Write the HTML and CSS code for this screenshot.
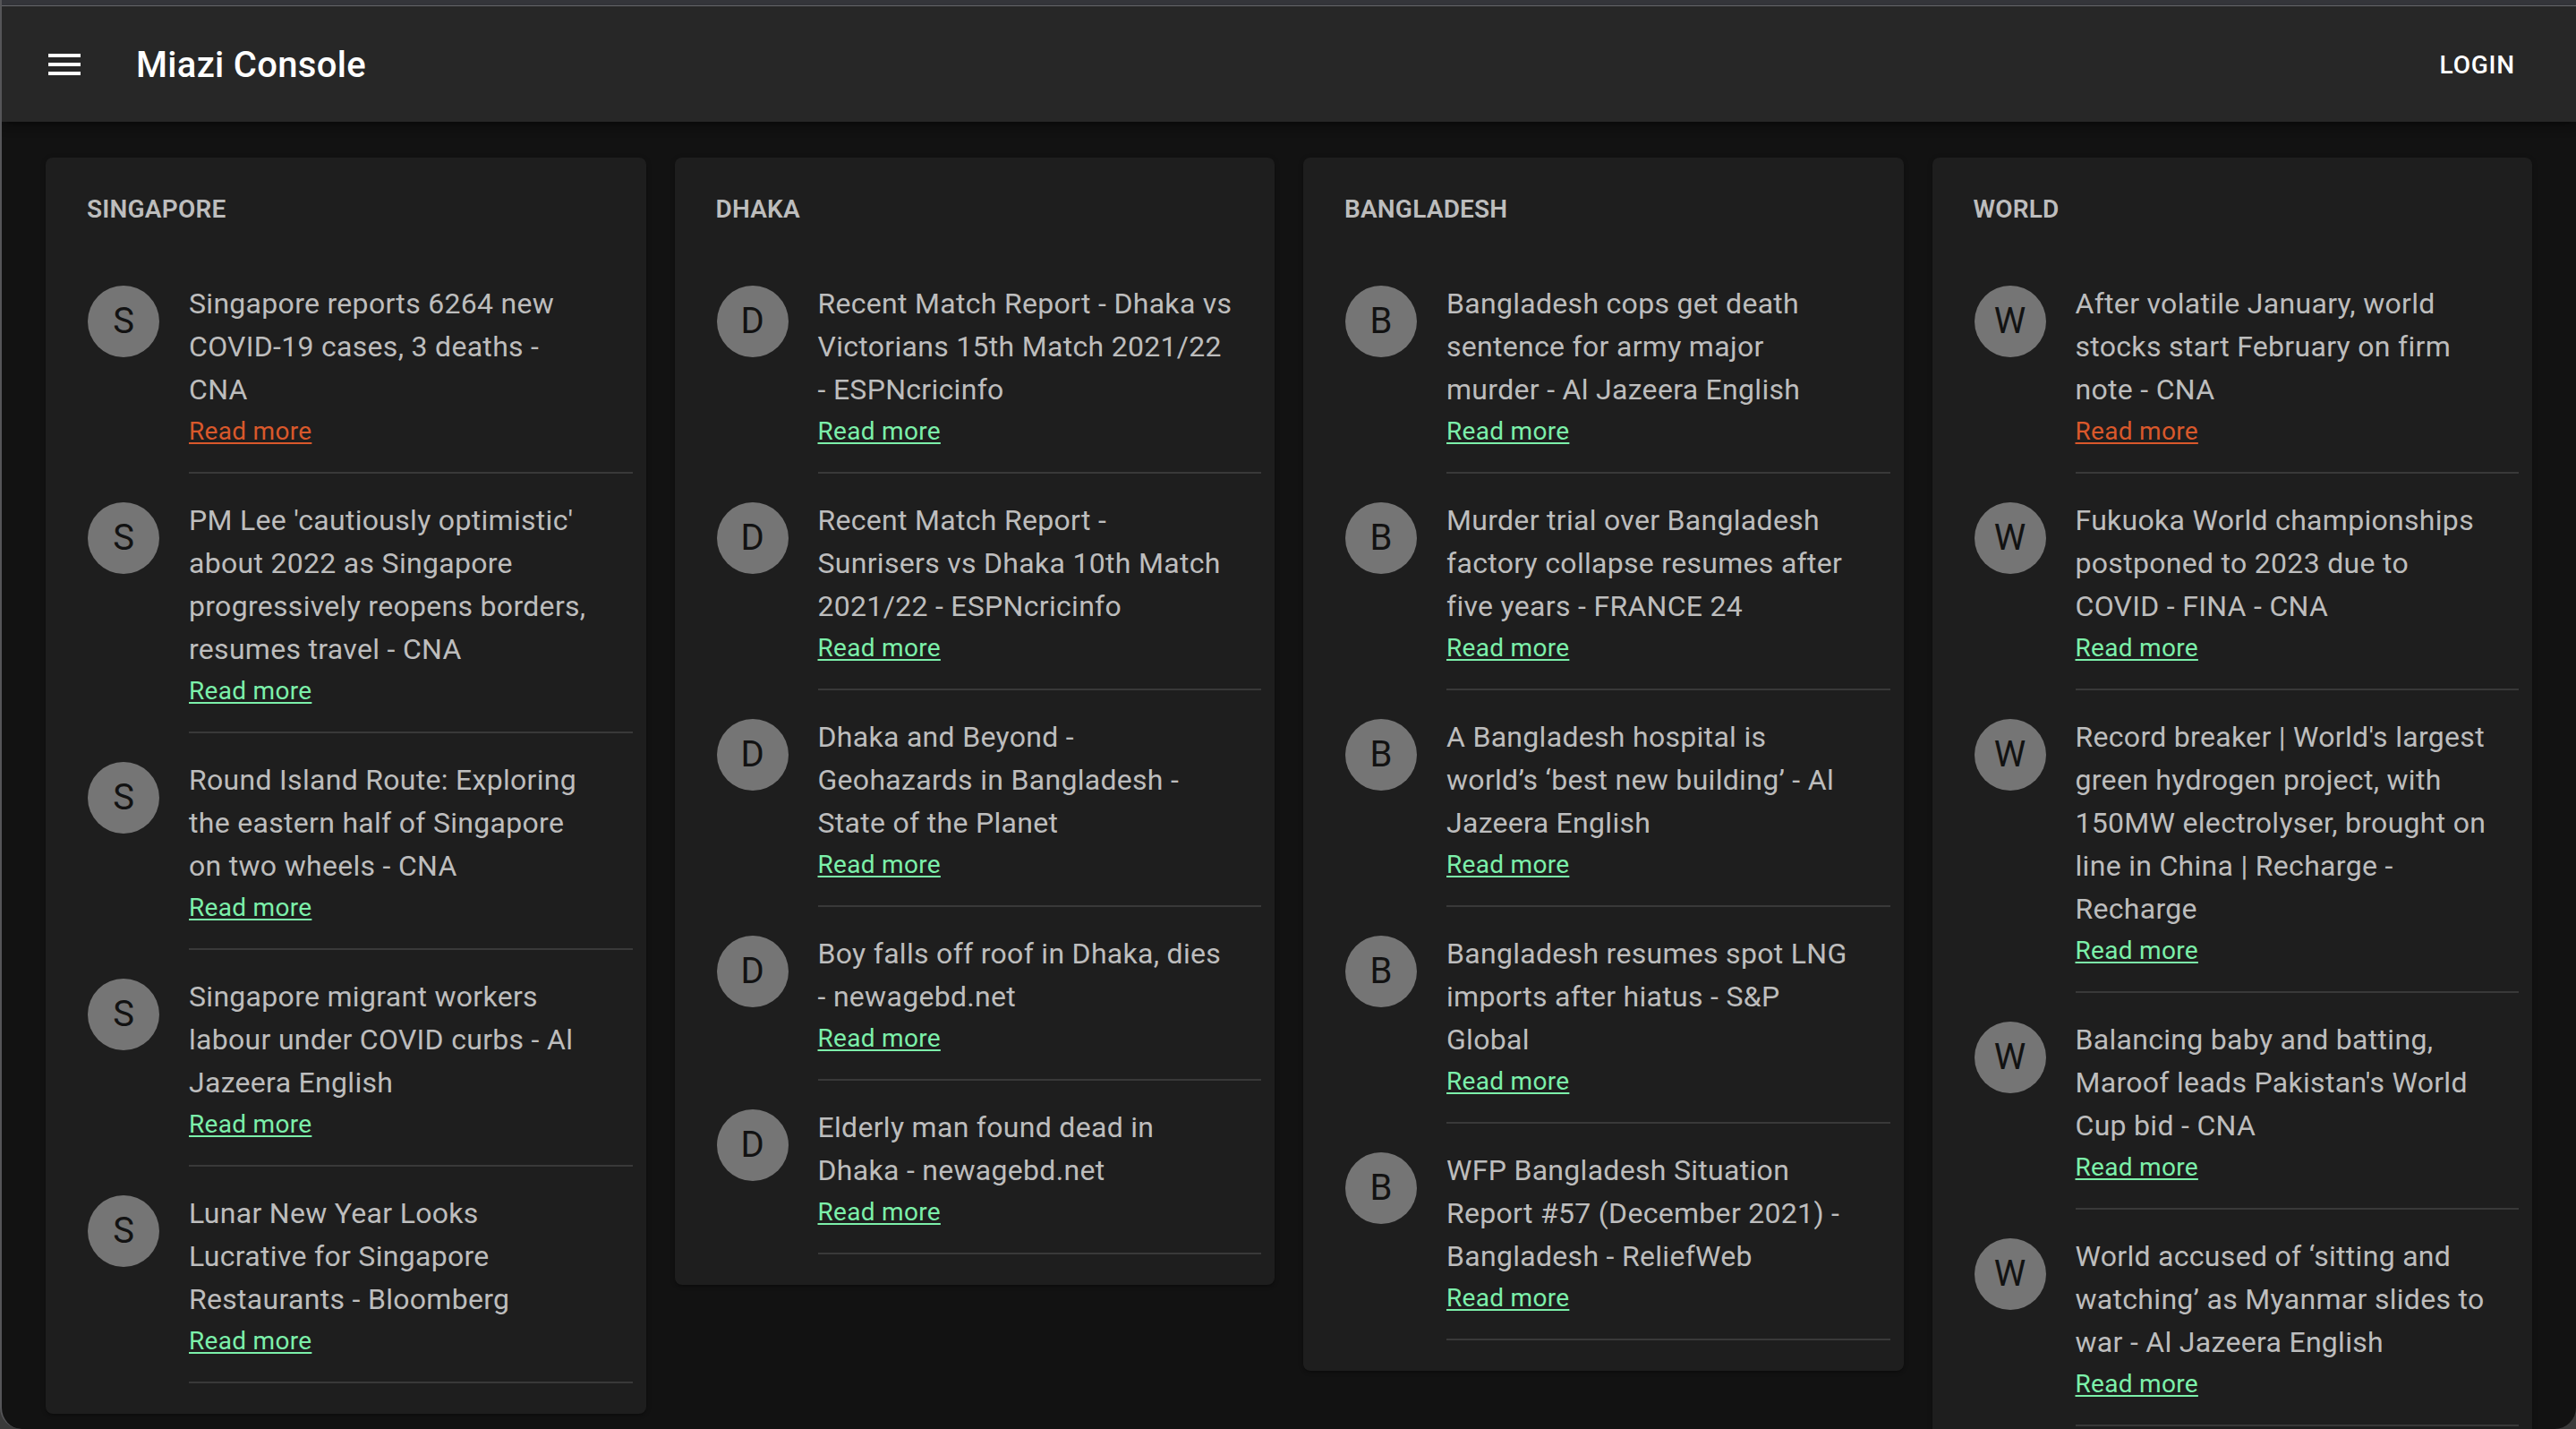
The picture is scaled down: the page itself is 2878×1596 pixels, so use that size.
FILE: index.html
```html
<!DOCTYPE html>
<html lang="en">
<head>
<meta charset="utf-8">
<title>Miazi Console</title>
<link rel="stylesheet" href="styles.css">
</head>
<body>
<div class="window">
  <div class="chrome"></div>
  <header class="appbar">
    <button class="icon-btn" aria-label="menu">
      <svg viewBox="0 0 24 24" width="48" height="48"><path fill="#fff" d="M3 18h18v-2H3v2zm0-5h18v-2H3v2zm0-7v2h18V6H3z"/></svg>
    </button>
    <h1 class="brand">Miazi Console</h1>
    <span class="spacer"></span>
    <button class="login">LOGIN</button>
  </header>
  <main class="grid">
    <section class="card">
      <h2 class="card-title">SINGAPORE</h2>
      <ul class="news">
        <li class="item"><span class="avatar">S</span><div class="text"><p class="headline">Singapore reports 6264 new COVID-19 cases, 3 deaths - CNA</p><a class="more visited" href="#">Read more</a></div></li>
        <li class="divider"></li>
        <li class="item"><span class="avatar">S</span><div class="text"><p class="headline">PM Lee 'cautiously optimistic' about 2022 as Singapore progressively reopens borders, resumes travel - CNA</p><a class="more" href="#">Read more</a></div></li>
        <li class="divider"></li>
        <li class="item"><span class="avatar">S</span><div class="text"><p class="headline">Round Island Route: Exploring the eastern half of Singapore on two wheels - CNA</p><a class="more" href="#">Read more</a></div></li>
        <li class="divider"></li>
        <li class="item"><span class="avatar">S</span><div class="text"><p class="headline">Singapore migrant workers labour under COVID curbs - Al Jazeera English</p><a class="more" href="#">Read more</a></div></li>
        <li class="divider"></li>
        <li class="item"><span class="avatar">S</span><div class="text"><p class="headline">Lunar New Year Looks Lucrative for Singapore Restaurants - Bloomberg</p><a class="more" href="#">Read more</a></div></li>
        <li class="divider"></li>
      </ul>
    </section>
    <section class="card">
      <h2 class="card-title">DHAKA</h2>
      <ul class="news">
        <li class="item"><span class="avatar">D</span><div class="text"><p class="headline">Recent Match Report - Dhaka vs Victorians 15th Match 2021/22 - ESPNcricinfo</p><a class="more" href="#">Read more</a></div></li>
        <li class="divider"></li>
        <li class="item"><span class="avatar">D</span><div class="text"><p class="headline">Recent Match Report - Sunrisers vs Dhaka 10th Match 2021/22 - ESPNcricinfo</p><a class="more" href="#">Read more</a></div></li>
        <li class="divider"></li>
        <li class="item"><span class="avatar">D</span><div class="text"><p class="headline">Dhaka and Beyond - Geohazards in Bangladesh - State of the Planet</p><a class="more" href="#">Read more</a></div></li>
        <li class="divider"></li>
        <li class="item"><span class="avatar">D</span><div class="text"><p class="headline">Boy falls off roof in Dhaka, dies - newagebd.net</p><a class="more" href="#">Read more</a></div></li>
        <li class="divider"></li>
        <li class="item"><span class="avatar">D</span><div class="text"><p class="headline">Elderly man found dead in Dhaka - newagebd.net</p><a class="more" href="#">Read more</a></div></li>
        <li class="divider"></li>
      </ul>
    </section>
    <section class="card">
      <h2 class="card-title">BANGLADESH</h2>
      <ul class="news">
        <li class="item"><span class="avatar">B</span><div class="text"><p class="headline">Bangladesh cops get death sentence for army major murder - Al Jazeera English</p><a class="more" href="#">Read more</a></div></li>
        <li class="divider"></li>
        <li class="item"><span class="avatar">B</span><div class="text"><p class="headline">Murder trial over Bangladesh factory collapse resumes after five years - FRANCE 24</p><a class="more" href="#">Read more</a></div></li>
        <li class="divider"></li>
        <li class="item"><span class="avatar">B</span><div class="text"><p class="headline">A Bangladesh hospital is world’s ‘best new building’ - Al Jazeera English</p><a class="more" href="#">Read more</a></div></li>
        <li class="divider"></li>
        <li class="item"><span class="avatar">B</span><div class="text"><p class="headline">Bangladesh resumes spot LNG imports after hiatus - S&amp;P Global</p><a class="more" href="#">Read more</a></div></li>
        <li class="divider"></li>
        <li class="item"><span class="avatar">B</span><div class="text"><p class="headline">WFP Bangladesh Situation Report #57 (December 2021) - Bangladesh - ReliefWeb</p><a class="more" href="#">Read more</a></div></li>
        <li class="divider"></li>
      </ul>
    </section>
    <section class="card">
      <h2 class="card-title">WORLD</h2>
      <ul class="news">
        <li class="item"><span class="avatar">W</span><div class="text"><p class="headline">After volatile January, world stocks start February on firm note - CNA</p><a class="more visited" href="#">Read more</a></div></li>
        <li class="divider"></li>
        <li class="item"><span class="avatar">W</span><div class="text"><p class="headline">Fukuoka World championships postponed to 2023 due to COVID - FINA - CNA</p><a class="more" href="#">Read more</a></div></li>
        <li class="divider"></li>
        <li class="item"><span class="avatar">W</span><div class="text"><p class="headline">Record breaker | World's largest green hydrogen project, with 150MW electrolyser, brought on line in China | Recharge - Recharge</p><a class="more" href="#">Read more</a></div></li>
        <li class="divider"></li>
        <li class="item"><span class="avatar">W</span><div class="text"><p class="headline">Balancing baby and batting, Maroof leads Pakistan's World Cup bid - CNA</p><a class="more" href="#">Read more</a></div></li>
        <li class="divider"></li>
        <li class="item"><span class="avatar">W</span><div class="text"><p class="headline">World accused of ‘sitting and watching’ as Myanmar slides to war - Al Jazeera English</p><a class="more" href="#">Read more</a></div></li>
        <li class="divider"></li>
      </ul>
    </section>
  </main>
</div>
</body>
</html>
```
FILE: styles.css
```css
html, body {
  margin: 0;
  padding: 0;
  background: #3a3a3a;
}
body {
  width: 2878px;
  height: 1596px;
  overflow: hidden;
  font-family: Roboto, "Noto Sans", "Liberation Sans", sans-serif;
}
.window {
  box-sizing: border-box;
  height: 1596px;
  background: #121212;
  border-left: 2px solid #555558;
  border-radius: 0 0 24px 24px;
  overflow: hidden;
}
.chrome {
  height: 6px;
  background: #34353a;
  border-bottom: 1px solid #6a6a6e;
}
.appbar {
  position: relative;
  z-index: 1;
  display: flex;
  align-items: center;
  height: 129px;
  padding: 2px 68px 0 46px;
  box-sizing: border-box;
  background: #272727;
  box-shadow: 0 4px 8px -2px rgba(0,0,0,0.4), 0 8px 10px 0 rgba(0,0,0,0.14);
}
.icon-btn {
  display: flex;
  padding: 0;
  margin: -2px 56px 0 0;
  border: 0;
  background: none;
}
.brand {
  margin: 0;
  font-size: 40px;
  font-weight: 500;
  letter-spacing: 0.3px;
  color: #fff;
  line-height: 64px;
}
.spacer { flex: 1; }
.login {
  padding: 0;
  border: 0;
  background: none;
  font-family: inherit;
  font-size: 28px;
  font-weight: 500;
  letter-spacing: 0.8px;
  color: #fff;
}
.grid {
  display: grid;
  grid-template-columns: repeat(4, 1fr);
  gap: 32px;
  align-items: start;
  padding: 40px 49px 0 49px;
}
.card {
  background: #1e1e1e;
  border-radius: 8px;
  box-shadow: 0 2px 2px rgba(0,0,0,0.2), 0 1px 6px rgba(0,0,0,0.14);
  padding: 0 15px 34px;
}
.card-title {
  margin: 0;
  padding: 36px 31px 0;
  font-size: 28px;
  line-height: 44px;
  font-weight: 600;
  letter-spacing: 0.2px;
  color: #bdbdbd;
}
.news {
  list-style: none;
  margin: 31px 0 0;
  padding: 0;
}
.item {
  display: flex;
  align-items: flex-start;
  padding: 16px 32px;
}
.avatar {
  flex: none;
  display: flex;
  align-items: center;
  justify-content: center;
  width: 80px;
  height: 80px;
  margin: 16px 33px 0 0;
  border-radius: 50%;
  background: #757575;
  color: #121212;
  font-size: 40px;
  line-height: 1;
}
.text {
  flex: 1;
  margin: 12px 0 9px;
}
.headline {
  margin: 0;
  font-size: 32px;
  line-height: 48px;
  letter-spacing: 0.3px;
  color: #bdbdbd;
}
.more {
  display: inline-block;
  margin-top: 3px;
  font-size: 28px;
  line-height: 40px;
  letter-spacing: 0.3px;
  color: #7cf0aa;
  text-decoration: underline;
  text-decoration-thickness: 2px;
  text-underline-offset: 3px;
}
.more.visited {
  color: #d9582b;
}
.divider {
  height: 2px;
  margin-left: 145px;
  background: rgba(255,255,255,0.12);
}
```
